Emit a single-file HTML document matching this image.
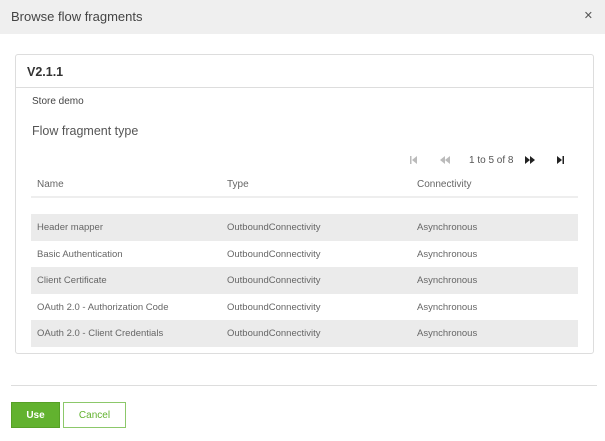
<!DOCTYPE html>
<html><head><style>
*{margin:0;padding:0;box-sizing:border-box}
body{width:605px;height:441px;background:#fff;font-family:"Liberation Sans",sans-serif;position:relative;overflow:hidden;color:#333}
.hdr{position:absolute;left:0;top:0;width:605px;height:34px;background:#efefef;font-size:13px;line-height:33px;padding-left:11px;color:#444}
.x{position:absolute;right:12px;top:0;font-size:11px;color:#555}
.card{position:absolute;left:15px;top:54px;width:579px;height:300px;border:1px solid #ddd;border-radius:3px}
.ch{height:33px;border-bottom:1px solid #ddd;font-size:12.5px;font-weight:bold;line-height:34px;padding-left:11px;color:#333}
.sd{position:absolute;left:16px;top:41px;font-size:10px;color:#444}
.ft{position:absolute;left:16px;top:69px;font-size:12.5px;color:#555}
.pg{position:absolute;top:100px;font-size:10px;color:#555}
.t{position:absolute;left:15px;width:547px;font-size:10px;color:#666}
.row{position:absolute;left:15px;width:547px;height:26.5px;line-height:27px;font-size:9.5px;color:#666}
.row span,.t span{position:absolute}
.g{background:#ebebeb}
.sep{position:absolute;left:11px;top:385px;width:586px;height:1px;background:#ddd}
.use{position:absolute;left:11px;top:402px;width:49px;height:26px;background:#62b22f;color:#fff;font-size:10px;font-weight:bold;text-align:center;line-height:25px;border:1px solid #56a026}
.can{position:absolute;left:63px;top:402px;width:63px;height:26px;border:1px solid #8cc86a;color:#62b22f;font-size:10px;text-align:center;line-height:26px}
svg{position:absolute}
</style></head><body>
<div class="hdr">Browse flow fragments<span class="x">✕</span></div>
<div class="card">
<div class="ch">V2.1.1</div>
<div class="sd">Store demo</div>
<div class="ft">Flow fragment type</div>
<svg style="left:394px;top:100px" width="8" height="10"><rect x="0" y="1" width="1.5" height="8" fill="#bbb"/><path d="M7 1L2 5L7 9Z" fill="#bbb"/></svg>
<svg style="left:424px;top:100px" width="11" height="10"><path d="M5 1L0 5L5 9ZM10 1L5 5L10 9Z" fill="#bbb"/></svg>
<div class="pg" style="left:453px">1 to 5 of 8</div>
<svg style="left:509px;top:100px" width="11" height="10"><path d="M0 1L5 5L0 9ZM5 1L10 5L5 9Z" fill="#222"/></svg>
<svg style="left:541px;top:100px" width="8" height="10"><path d="M0 1L5 5L0 9Z" fill="#222"/><rect x="5.5" y="1" width="1.5" height="8" fill="#222"/></svg>
<div class="t" style="top:124px;height:19px;border-bottom:2px solid #eee"><span style="left:6px">Name</span><span style="left:196px">Type</span><span style="left:386px">Connectivity</span></div>
<div class="row g" style="top:159px"><span style="left:6px">Header mapper</span><span style="left:196px">OutboundConnectivity</span><span style="left:386px">Asynchronous</span></div>
<div class="row" style="top:185.5px"><span style="left:6px">Basic Authentication</span><span style="left:196px">OutboundConnectivity</span><span style="left:386px">Asynchronous</span></div>
<div class="row g" style="top:212px"><span style="left:6px">Client Certificate</span><span style="left:196px">OutboundConnectivity</span><span style="left:386px">Asynchronous</span></div>
<div class="row" style="top:238.5px"><span style="left:6px">OAuth 2.0 - Authorization Code</span><span style="left:196px">OutboundConnectivity</span><span style="left:386px">Asynchronous</span></div>
<div class="row g" style="top:265px"><span style="left:6px">OAuth 2.0 - Client Credentials</span><span style="left:196px">OutboundConnectivity</span><span style="left:386px">Asynchronous</span></div>
</div>
<div class="sep"></div>
<div class="use">Use</div>
<div class="can">Cancel</div>
</body></html>
